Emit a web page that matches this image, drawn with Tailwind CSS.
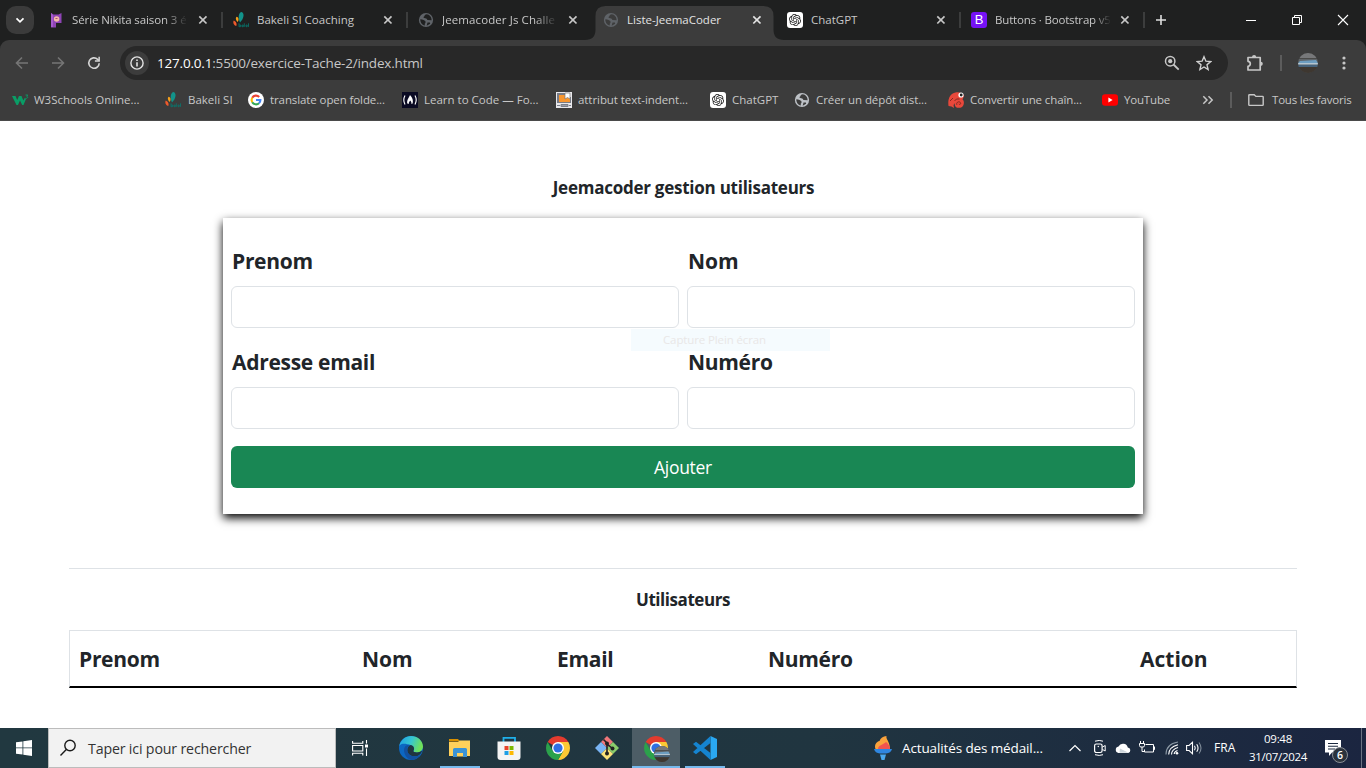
<!DOCTYPE html>
<html lang="fr">
<head>
<meta charset="utf-8">
<title>Liste-JeemaCoder</title>
<script src="https://cdn.jsdelivr.net/npm/@tailwindcss/browser@4"></script>
</head>
<body class="w-[1366px] h-[768px] overflow-hidden flex flex-col bg-white text-[#212529] font-['Open_Sans','Noto_Sans',sans-serif]">

<!-- shared symbols -->
<svg class="absolute w-0 h-0">
  <symbol id="x" viewBox="0 0 16 16"><path d="M4.3 4.3l7.2 7.2M11.500 4.300l-7.200 7.200" stroke="currentColor" stroke-width="1.7" fill="none"/></symbol>
  <symbol id="globe" viewBox="0 0 16 16"><circle cx="8" cy="8" r="7.100" fill="currentColor"/><path d="M8.800 2.300c-1.800.2-2.200 1.200-2.600 2.100-.9.300-.9 1.300.1 1.700l1.900.300c1.400.4.6 1.500 1.700 1.700l3.700.1c.1-3.100-2-5.600-4.800-5.900z" fill="var(--hole)"/><path d="M2.300 7.300c1.200 0 2.300.2 3.300.8 1.100.7 1.900.6 1.900 1.800 0 .9 0 1.300-.7 1.500v2.200c-2.600-.5-4.600-3-4.500-6.300z" fill="var(--hole)"/><path d="M9.500 10.400h2.400c.4 1 .3 1.500-.6 1.900l-2.600 1.400z" fill="var(--hole)"/></symbol>
  <symbol id="bakeli" viewBox="0 0 16 16"><path d="M7 10.500C4.500 5 6 .6 8.500.1c3 .8 2.800 6.500-1.500 10.400z" fill="#12938a"/><path d="M4.800 10C2.300 8 2.500 5.400 3.800 4.800c2 .8 2.300 2.900 1 5.200z" fill="#f5a01c"/><path d="M.8 8.600c2.300.9 3.400 3.400 2.400 5.400C.7 13.300-.4 10.300.8 8.600z" fill="#ef5a2b"/><path d="M6 11.200v3.700M6 13h1.700v1.700H6M9 13.100h1.300v1.600H9zM11.300 11.300v3.600M13 13h1.200v1.700H13zM15.500 11.300v3.600" stroke="#08776f" fill="none" stroke-width=".8"/></symbol>
  <symbol id="gpt" viewBox="0 0 16 16"><rect width="16" height="16" rx="3" fill="#fff"/><path transform="translate(2 2) scale(.5)" fill="#1c1c1c" d="M22.2819 9.8211a5.9847 5.9847 0 0 0-.5157-4.9108 6.0462 6.0462 0 0 0-6.5098-2.9A6.0651 6.0651 0 0 0 4.9807 4.1818a5.9847 5.9847 0 0 0-3.9977 2.9 6.0462 6.0462 0 0 0 .7427 7.0966 5.98 5.98 0 0 0 .511 4.9107 6.051 6.051 0 0 0 6.5146 2.9001A5.9847 5.9847 0 0 0 13.2599 24a6.0557 6.0557 0 0 0 5.7718-4.2058 5.9894 5.9894 0 0 0 3.9977-2.9001 6.0557 6.0557 0 0 0-.7475-7.0729zm-9.022 12.6081a4.4755 4.4755 0 0 1-2.8764-1.0408l.1419-.0804 4.7783-2.7582a.7948.7948 0 0 0 .3927-.6813v-6.7369l2.02 1.1686a.071.071 0 0 1 .038.052v5.5826a4.504 4.504 0 0 1-4.4945 4.4944zm-9.6607-4.1254a4.4708 4.4708 0 0 1-.5346-3.0137l.142.0852 4.783 2.7582a.7712.7712 0 0 0 .7806 0l5.8428-3.3685v2.3324a.0804.0804 0 0 1-.0332.0615L9.74 19.9502a4.4992 4.4992 0 0 1-6.1408-1.6464zM2.3408 7.8956a4.485 4.485 0 0 1 2.3655-1.9728V11.6a.7664.7664 0 0 0 .3879.6765l5.8144 3.3543-2.0201 1.1685a.0757.0757 0 0 1-.071 0l-4.8303-2.7865A4.504 4.504 0 0 1 2.3408 7.872zm16.5963 3.8558L13.1038 8.364 15.1192 7.2a.0757.0757 0 0 1 .071 0l4.8303 2.7913a4.4944 4.4944 0 0 1-.6765 8.1042v-5.6772a.79.79 0 0 0-.407-.667zm2.0107-3.0231l-.142-.0852-4.7735-2.7818a.7759.7759 0 0 0-.7854 0L9.409 9.2297V6.8974a.0662.0662 0 0 1 .0284-.0615l4.8303-2.7866a4.4992 4.4992 0 0 1 6.6802 4.66zM8.3065 12.863l-2.02-1.1638a.0804.0804 0 0 1-.038-.0567V6.0742a4.4992 4.4992 0 0 1 7.3757-3.4537l-.142.0805L8.704 5.459a.7948.7948 0 0 0-.3927.6813zm1.0976-2.3654l2.602-1.4998 2.6069 1.4998v2.9994l-2.5974 1.4997-2.6067-1.4997Z"/></symbol>
  <symbol id="chrome" viewBox="0 0 24 24"><path d="M12 12L1.610 6A12 12 0 0 1 22.390 6z" fill="#e33b2e"/><path d="M12 6H22.390A12 12 0 0 1 12 24l5.200-9z" fill="#fcc934"/><path d="M1.610 6L6.800 15l5.200 3 5.200-3L12 24A12 12 0 0 1 1.610 6z" fill="#2ba14b"/><circle cx="12" cy="12" r="6" fill="#fff"/><circle cx="12" cy="12" r="4.600" fill="#2f6fe4"/></symbol>
  <clipPath id="avc"><circle cx="10" cy="10" r="10"/></clipPath>
  <symbol id="avatar" viewBox="0 0 20 20"><g clip-path="url(#avc)"><rect width="20" height="20" fill="#4a4a48"/><rect width="20" height="5" fill="#77787a"/><path d="M0 6h20v3H0z" fill="#5f6468"/><path d="M2 8l16-1 2 3H0z" fill="#6d9dc0"/><path d="M0 10h20v1.700H0z" fill="#b4c5d0"/><path d="M0 11.700h20V14H0z" fill="#46637c"/><path d="M0 14h20v6H0z" fill="#3e3730"/></g></symbol>
</svg>

<!-- tab strip -->
<header class="h-10 shrink-0 bg-[#1f2020] flex items-center text-[11.5px] leading-4 text-[#c7c7c7]">
  <div class="w-7 h-7 ml-1.5 mr-1 rounded-[10px] bg-[#3b3b3b] flex items-center justify-center shrink-0">
    <svg class="w-3 h-3 text-white" viewBox="0 0 12 12"><path d="M2.500 4.300L6 7.800l3.500-3.500" fill="none" stroke="currentColor" stroke-width="1.700"/></svg>
  </div>

  <div class="w-[185px] h-full flex items-center pl-2.5 shrink-0">
    <svg class="w-4 h-4 mr-2 shrink-0" viewBox="0 0 16 16"><path d="M3 1l2.500 1.500h5L13.500 1v10H8v4.500H3z" fill="#8e44b5"/><path d="M3 1l2 2v12H3z" fill="#a65bcd"/><circle cx="8.600" cy="7" r="2.800" fill="#f3b9a9"/><path d="M7.500 6h2v1h-2z" fill="#a9526f"/></svg>
    <span class="w-[116px] whitespace-nowrap tracking-[-0.11px] mask-r-from-80%">Série Nikita saison 3 é</span>
    <svg class="w-4 h-4 ml-[7px]"><use href="#x"/></svg>
    <i class="w-0.5 h-4 bg-[#3c3d3d] ml-2.5"></i>
  </div>
  <div class="w-[185px] h-full flex items-center pl-2.5 shrink-0">
    <svg class="w-4 h-4 mr-2 shrink-0"><use href="#bakeli"/></svg>
    <span class="w-[116px] whitespace-nowrap">Bakeli SI Coaching</span>
    <svg class="w-4 h-4 ml-[7px]"><use href="#x"/></svg>
    <i class="w-0.5 h-4 bg-[#3c3d3d] ml-2.5"></i>
  </div>
  <div class="w-[185px] h-full flex items-center pl-2.5 shrink-0">
    <svg class="w-4 h-4 mr-2 shrink-0 text-[#5f6368] [--hole:#1f2020]"><use href="#globe"/></svg>
    <span class="w-[116px] whitespace-nowrap tracking-[0.1px] mask-r-from-80%">Jeemacoder Js Challe</span>
    <svg class="w-4 h-4 ml-[7px]"><use href="#x"/></svg>
  </div>
  <div class="w-[184px] h-full flex items-center pl-2.5 shrink-0 relative text-[#e3e3e3]">
    <svg class="absolute -left-[8.500px] top-1.5 w-[199px] h-[34px]" viewBox="0 0 199 34"><path d="M0 34Q10.500 34 10.500 23.500V10Q10.500 0 20.500 0H178.500Q188.500 0 188.500 10V23.500Q188.500 34 199 34z" fill="#3c3c3c"/></svg>
    <svg class="w-4 h-4 mr-2 shrink-0 relative text-[#5f6368] [--hole:#3c3c3c]"><use href="#globe"/></svg>
    <span class="w-[116px] whitespace-nowrap relative">Liste-JeemaCoder</span>
    <svg class="w-4 h-4 ml-1.5 relative"><use href="#x"/></svg>
  </div>
  <div class="w-[184px] h-full flex items-center pl-2.5 shrink-0">
    <svg class="w-4 h-4 mr-2 shrink-0"><use href="#gpt"/></svg>
    <span class="w-[116px] whitespace-nowrap">ChatGPT</span>
    <svg class="w-4 h-4 ml-1.5"><use href="#x"/></svg>
    <i class="w-0.5 h-4 bg-[#3c3d3d] ml-2.5"></i>
  </div>
  <div class="w-[184px] h-full flex items-center pl-2.5 shrink-0">
    <span class="w-4 h-4 mr-2 shrink-0 rounded-[3px] bg-[#7612f5] text-white text-[13px] leading-4 font-medium text-center font-['Liberation_Sans',sans-serif]">B</span>
    <span class="w-[116px] whitespace-nowrap tracking-[-0.17px] mask-r-from-85%">Buttons · Bootstrap v5</span>
    <svg class="w-4 h-4 ml-1.5"><use href="#x"/></svg>
    <i class="w-0.5 h-4 bg-[#3c3d3d] ml-2.5"></i>
  </div>
  <svg class="w-3 h-3 ml-2.5 text-[#dedede] shrink-0" viewBox="0 0 12 12"><path d="M6 1v10M1 6h10" stroke="currentColor" stroke-width="1.600"/></svg>
  <div class="ml-auto flex text-white">
    <span class="w-[46px] flex justify-center"><svg class="w-3 h-3" viewBox="0 0 12 12"><path d="M1 6.500h10" stroke="currentColor"/></svg></span>
    <span class="w-[46px] flex justify-center"><svg class="w-3 h-3" viewBox="0 0 12 12"><path d="M1.500 3.500h7v7h-7zM3.500 3.500v-2h7v7h-2" fill="none" stroke="currentColor"/></svg></span>
    <span class="w-[46px] flex justify-center"><svg class="w-3 h-3" viewBox="0 0 12 12"><path d="M1 1l10 10M11 1L1 11" stroke="currentColor" stroke-width="1.100"/></svg></span>
  </div>
</header>

<!-- toolbar -->
<div class="bg-[#1f2020] shrink-0">
<div class="h-[46px] bg-[#3c3c3c] rounded-t-[9px] flex items-center">
  <svg class="w-4 h-4 ml-3.5 text-[#757575]" viewBox="0 0 16 16"><path d="M14 8H3M8 2.500L2.500 8 8 13.500" fill="none" stroke="currentColor" stroke-width="1.600"/></svg>
  <svg class="w-4 h-4 ml-5 text-[#757575]" viewBox="0 0 16 16"><path d="M2 8h11M8 2.500L13.500 8 8 13.500" fill="none" stroke="currentColor" stroke-width="1.600"/></svg>
  <svg class="w-4 h-4 ml-5 text-[#d5d5d5]" viewBox="0 0 16 16"><path d="M13.200 8.200A5.200 5.200 0 1 1 11.600 4.300l1.200 1.200" fill="none" stroke="currentColor" stroke-width="1.600"/><path d="M13.900 1.800v5H8.900V5.300h3.500V1.800z" fill="currentColor"/></svg>
  <div class="ml-[18px] w-[1108px] h-[34px] rounded-full bg-[#282828] flex items-center pl-[5px]">
    <span class="w-6 h-6 rounded-full bg-[#3c3c3c] flex items-center justify-center"><svg class="w-3.5 h-3.5 text-[#e3e3e3]" viewBox="0 0 14 14"><circle cx="7" cy="7" r="6.100" fill="none" stroke="currentColor" stroke-width="1.400"/><path d="M6.200 6.200h1.600v4.200H6.200zM6.200 3.500h1.600v1.600H6.200z" fill="currentColor"/></svg></span>
    <span class="ml-2 text-[13.500px] leading-5 tracking-[-0.190px] text-[#c7c7c7]"><span class="text-white">127.0.0.1</span>:5500/exercice-Tache-2/index.html</span>
    <svg class="w-4 h-4 ml-auto text-[#c7c7c7]" viewBox="0 0 16 16"><circle cx="6.200" cy="6.200" r="4.700" fill="none" stroke="currentColor" stroke-width="1.500"/><path d="M9.500 9.500l5.200 5.200" stroke="currentColor" stroke-width="1.800"/><circle cx="6.200" cy="6.200" r="2.100" fill="currentColor"/></svg>
    <svg class="w-4 h-4 ml-4 mr-4 text-[#d0d0d0]" viewBox="0 0 16 16"><path d="M8 1.700l1.900 4.500 4.800.4-3.700 3.200 1.100 4.700L8 12l-4.100 2.500L5 9.800 1.300 6.600l4.800-.4z" fill="none" stroke="currentColor" stroke-width="1.400"/></svg>
  </div>
  <svg class="w-[18px] h-[18px] ml-[18px] text-[#c7c7c7]" viewBox="0 0 18 18"><path d="M2 3.500h12.200V16H2v-3.700q2.300-.3 2.300-2.500T2 7.300z" fill="none" stroke="currentColor" stroke-width="1.700" stroke-linejoin="round"/><path d="M6 3a2.100 2 0 0 1 4.200 0zM14.800 7.700a2 2.100 0 0 1 0 4.200z" fill="currentColor"/></svg>
  <i class="w-0.5 h-4 ml-4 bg-[#5c5c5c]"></i>
  <svg class="w-5 h-5 ml-4"><use href="#avatar"/></svg>
  <svg class="w-4 h-4 ml-[18px] text-[#c7c7c7]" viewBox="0 0 16 16"><circle cx="8" cy="3" r="1.600" fill="currentColor"/><circle cx="8" cy="8" r="1.600" fill="currentColor"/><circle cx="8" cy="13" r="1.600" fill="currentColor"/></svg>
</div>
</div>

<!-- bookmarks -->
<nav class="h-[35px] shrink-0 bg-[#3c3c3c] border-b border-[#4a4a4a] flex items-center pl-3 pb-1.5 text-[11.500px] leading-4 text-[#c7c7c7] whitespace-nowrap">
  <div class="w-[153px] flex items-center"><svg class="w-[18px] h-4 mr-1" viewBox="0 0 18 16"><path d="M0 4h3.500l1.700 4L7 4h2.500l1.800 4.500L13 5.500l1 1.500-2.500 6h-1.300L8 8.500 6 13H4.500z" fill="#0a9d66"/><path d="M13.500 3h2.300l-1.100 1.300c1.600.4 1.100 2.200-.6 2" fill="none" stroke="#0a9d66" stroke-width=".9"/></svg>W3Schools Online...</div>
  <div class="w-[83px] flex items-center"><svg class="w-4 h-4 mr-[7px]"><use href="#bakeli"/></svg>Bakeli SI</div>
  <div class="w-[154px] flex items-center"><svg class="w-4 h-4 mr-1.5" viewBox="0 0 16 16"><circle cx="8" cy="8" r="8" fill="#fff"/><g fill="none" stroke-width="2.100"><path d="M4.200 5.800A4.400 4.400 0 0 1 11.200 5" stroke="#ea4335"/><path d="M4.200 10.200a4.400 4.400 0 0 1 0-4.400" stroke="#fbbc05"/><path d="M11 11.200a4.400 4.400 0 0 1-6.800-1" stroke="#34a853"/><path d="M8 8h4.400a4.400 4.400 0 0 1-1.400 3.200" stroke="#4285f4"/></g></svg><span class="tracking-[-0.100px]">translate open folde...</span></div>
  <div class="w-[154px] flex items-center"><svg class="w-4 h-4 mr-1.5" viewBox="0 0 16 16"><rect width="16" height="16" fill="#0a0a23"/><path d="M3 3.500Q.6 8 3 12.500M13 3.500q2.400 4.500 0 9" fill="none" stroke="#fff" stroke-width="1.100"/><path d="M8 3c2 2.500 3.600 4.800 2.600 8.500L9.400 12c.3-1.500-.3-2.500-1.200-3.500-.6 1-1.700 2-1.400 3.500l-1.500-.5C4.500 8.300 7 5.500 8 3z" fill="#fff"/></svg>Learn to Code — Fo...</div>
  <div class="w-[154px] flex items-center"><svg class="w-4 h-4 mr-1.5" viewBox="0 0 16 16"><rect width="16" height="16" fill="#e8e8ec"/><path d="M1 1h9v4h5v6H1z" fill="#777b86"/><path d="M3 3h11v7H3z" fill="#f7962f"/><path d="M9 1h5v6l-2.500-1.500L9 7z" fill="#fff" stroke="#777" stroke-width=".7"/><path d="M1 13.500h3M5 12.500h7v2H5zM13 13.500h2" fill="#9a9da6" stroke="#7b7f8a" stroke-width="1"/></svg><span class="tracking-[-0.060px]">attribut text-indent...</span></div>
  <div class="w-[84px] flex items-center"><svg class="w-4 h-4 mr-1.5"><use href="#gpt"/></svg>ChatGPT</div>
  <div class="w-[154px] flex items-center"><svg class="w-4 h-4 mr-1.5 text-[#bdc1c6] [--hole:#3c3c3c]"><use href="#globe"/></svg><span class="tracking-[-0.080px]">Créer un dépôt dist...</span></div>
  <div class="w-[154px] flex items-center"><svg class="w-4 h-4 mr-1.5" viewBox="0 0 16 16"><path d="M.5 14C-.5 7 2 1.500 7.500.5c4-.7 7.500.5 8.500 3.500l-1.500 3.500c2.200 1.500 2 7-2 8.200-4.500.8-6.500-1.700-5.500-4.700L5.500 13l.5 3-2.500-1.500z" fill="#e8483b"/><path d="M8.800 12.800c-1-3 3-4 3.800-1.800.4 1.400-1.400 2-1.700.8M2 9l3-3M6.500 9l2-2h3" fill="none" stroke="#7a241d" stroke-width=".9"/><circle cx="13" cy="3" r="2.600" fill="#fff"/><circle cx="13.200" cy="3" r="1.400" fill="#222"/></svg><span class="tracking-[-0.110px]">Convertir une chaîn...</span></div>
  <div class="w-[98px] flex items-center"><svg class="w-4 h-4 mr-1.5" viewBox="0 0 16 16"><rect y="2.300" width="16" height="11.400" rx="3" fill="#f00"/><path d="M6.400 5.500l4.200 2.500-4.200 2.500z" fill="#fff"/></svg><span class="tracking-[-0.180px]">YouTube</span></div>
  <svg class="w-4 h-4 text-[#c7c7c7]" viewBox="0 0 16 16"><path d="M3.300 4.300L7 8l-3.700 3.700M8.500 4.300L12.200 8l-3.700 3.700" fill="none" stroke="currentColor" stroke-width="1.500"/></svg>
  <i class="w-0.5 h-4 ml-3.5 bg-[#5c5c5c]"></i>
  <svg class="w-4 h-4 ml-4 mr-2" viewBox="0 0 16 16"><path d="M.8 3.300Q.8 2.700 1.500 2.700h4.700l1.700 1.700h6.600q.7 0 .7.700v7.600q0 .7-.7.700h-13q-.7 0-.7-.7z" fill="none" stroke="currentColor" stroke-width="1.400"/></svg>
  <span class="tracking-[-0.200px]">Tous les favoris</span>
</nav>

<!-- page -->
<main class="h-[607px] shrink-0 px-[69px] pt-[53px] flex flex-col font-bold relative">
  <h1 class="text-center text-[17px] leading-7 tracking-[-0.250px] h-11 pl-px">Jeemacoder gestion utilisateurs</h1>
  <form class="w-[920px] h-[296px] mx-auto px-2 pt-[26px] shadow-[0_4px_9px_#000] bg-white">
    <div class="grid grid-cols-2 gap-x-2 text-[21px] leading-[35px] tracking-[-0.300px]">
      <label class="h-[101px] block"><span class="block h-[42px] pl-px">Prenom</span><input class="block w-full h-[42px] border border-[#dee2e6] rounded-md"></label>
      <label class="h-[101px] block"><span class="block h-[42px] pl-px tracking-[0px]">Nom</span><input class="block w-full h-[42px] border border-[#dee2e6] rounded-md"></label>
      <label class="h-[101px] block"><span class="block h-[42px] pl-px">Adresse email</span><input class="block w-full h-[42px] border border-[#dee2e6] rounded-md"></label>
      <label class="h-[101px] block"><span class="block h-[42px] pl-px">Numéro</span><input class="block w-full h-[42px] border border-[#dee2e6] rounded-md"></label>
    </div>
    <button type="button" class="w-full h-[42px] rounded-md bg-[#198754] text-white font-normal text-[17.500px] leading-6 tracking-[-0.300px] block">Ajouter</button>
  </form>
  <div class="absolute left-[631px] top-[208px] w-[199px] h-[22px] bg-[#f5fbfe] pl-8 text-[11.500px] leading-[22px] font-normal tracking-[-0.120px] text-[#e9e7e7]">Capture Plein écran</div>
  <hr class="mt-[54px] border-[#dee2e6]">
  <h2 class="text-center text-[17px] leading-7 tracking-[-0.440px] mt-[17px]">Utilisateurs</h2>
  <div class="mt-4 h-[58px] border border-b-2 border-[#dee2e6] border-b-black grid grid-cols-[283px_195px_211px_372px_1fr] pl-[9px] items-center text-[21px] leading-8 tracking-[-0.300px]">
    <span>Prenom</span><span class="tracking-[0px]">Nom</span><span>Email</span><span>Numéro</span><span class="tracking-[0px]">Action</span>
  </div>
</main>

<!-- taskbar -->
<footer class="h-10 shrink-0 bg-linear-to-r from-[#213840] via-[#203540] via-60% to-[#1b2540] flex items-center text-white whitespace-nowrap">
  <div class="w-12 flex justify-center"><svg class="w-4 h-4" viewBox="0 0 16 16"><path d="M0 2.300l6.500-.9v6.100H0zM7.300 1.300L16 0v7.500H7.300zM0 8.300h6.500v6.200L0 13.700zM7.300 8.300H16V16l-8.700-1.300z" fill="#fff"/></svg></div>
  <div class="w-72 h-10 bg-[#f2f2f2] border border-[#bcbcbc] flex items-center text-[#333]">
    <svg class="w-[18px] h-[18px] ml-2.5" viewBox="0 0 18 18"><circle cx="11" cy="6.500" r="5.200" fill="none" stroke="#1a1a1a" stroke-width="1.400"/><path d="M7.300 10.400L1.500 16.500" stroke="#1a1a1a" stroke-width="1.400"/></svg>
    <span class="ml-[11px] text-[14.200px] tracking-[-0.160px] pt-0.5">Taper ici pour rechercher</span>
  </div>
  <div class="w-12 flex justify-center"><svg class="w-4 h-4" viewBox="0 0 16 16"><g fill="none" stroke="#fff" stroke-width="1.100"><path d="M.6 1v2.200h10.200V1M.6 15.500v-2.200h10.200v2.200M.6 5.500h10.200v5.500H.6zM14.500 0v3.500M14.500 8.500V16"/></g><path d="M13 4.500h3v3h-3z" fill="#fff"/></svg></div>

  <div class="w-[54px] flex justify-center"><svg class="w-6 h-6" viewBox="0 0 24 24"><defs><linearGradient id="ea" x1="0" x2="1" y1="0" y2=".3"><stop offset="0" stop-color="#1c9ee8"/><stop offset=".55" stop-color="#37c6d0"/><stop offset="1" stop-color="#6fe05a"/></linearGradient></defs><circle cx="12" cy="12" r="12" fill="#0c67c2"/><path d="M.2 10C1.500 4 6.300 0 12 0c6.600 0 12 4.700 12 10.500 0 3.600-2.800 6-6 6-2.400 0-4-.8-3.600-1.700 1.400-1.600 1-5.100-2.900-5.900C7.500 8 2.500 6.500.2 10z" fill="url(#ea)"/><path d="M8.300 14.500c0-2.800 1.300-4.900 3.500-5.500 3.300.7 3.900 4.100 2.600 5.800-.4.900 1.200 1.700 3.600 1.700 1.600 0 3-.4 4.200-1.400.5-.2.900.2.600.7-1.300 2.400-3.200 4-5.400 4.400-5 .8-9.100-2-9.100-5.700z" fill="#203540"/><path d="M5 14c0-3 1.900-5 5.300-5.200-1.600 1.400-2.200 3.300-2 5.700.4 3.900 4.500 6.300 9.100 5.700 1.700-.3 3-.9 4.200-2-1.300 3-5.400 5.700-9.400 5.700C7.500 22.800 5 18 5 14z" fill="#1250a0"/></svg></div>
  <div class="w-12 h-full flex flex-col items-center -ml-0.5 relative"><svg class="w-[22px] h-6 mt-2" viewBox="0 0 22 24"><path d="M0 3h9l2 2.500H0z" fill="#d99000"/><path d="M0 6h9l1.500-1.500H21V20H0z" fill="#ffd15b"/><path d="M4 13.500q0-1.500 1.500-1.500h11q1.500 0 1.500 1.500V21h-4v-4H8v4H4z" fill="#3a93d6"/><path d="M8 17h6v3.500H8z" fill="#ffd15b"/></svg><i class="absolute bottom-0 left-1 w-10 h-0.5 bg-[#76b9ed]"></i></div>
  <div class="w-[49px] flex justify-center"><svg class="w-6 h-6" viewBox="0 0 24 24"><path d="M6.500 6V1.800h11.500V6" fill="none" stroke="#1fb0ea" stroke-width="1.800"/><path d="M.5 5.500h23V21q0 3-3 3h-17q-3 0-3-3z" fill="#f4f4f4"/><path d="M7.500 10h4v4h-4z" fill="#e8442a"/><path d="M12.500 10h4v4h-4z" fill="#7cb900"/><path d="M7.500 15h4v4h-4z" fill="#1d9fe6"/><path d="M12.500 15h4v4h-4z" fill="#fdb900"/></svg></div>
  <div class="w-[49px] flex justify-center"><svg class="w-6 h-6"><use href="#chrome"/></svg></div>
  <div class="w-[49px] flex justify-center"><svg class="w-6 h-6" viewBox="0 0 24 24"><path d="M12 0l6 6-6 6-6-6z" fill="#f0767a"/><path d="M6 6l6 6-6 6-6-6z" fill="#79b4f4"/><path d="M18 6l6 6-6 6-6-6z" fill="#8acb6b"/><path d="M12 12l6 6-6 6-6-6z" fill="#fbe278"/><path d="M8.500 3.500L12 7v11M12 8l5.500 4.500" fill="none" stroke="#222" stroke-width="1.600"/><circle cx="12" cy="7.500" r="2" fill="#222"/><circle cx="12" cy="17.500" r="2" fill="#222"/><circle cx="17.500" cy="12.500" r="2" fill="#222"/></svg></div>
  <div class="w-12 h-full ml-px bg-[#4d5d66] border-b-2 border-[#76b9ed] flex justify-center pt-2 relative"><svg class="w-6 h-6"><use href="#chrome"/></svg><svg class="absolute left-[22px] top-[18px] w-4 h-4"><use href="#avatar"/></svg></div>
  <div class="w-[50px] h-full flex justify-center relative"><svg class="w-6 h-6 mt-2" viewBox="0 0 24 24"><path d="M17.500 0L24 3v18l-6.500 3z" fill="#2aa8f2"/><path d="M17.500 0v7L3 18.300 0 16zM0 8l3-2.300L17.500 17v7z" fill="#1584d0"/></svg><i class="absolute bottom-0 left-[5px] w-10 h-0.5 bg-[#76b9ed]"></i></div>

  <div class="ml-auto flex items-center h-full">
    <svg class="w-[18px] h-6" viewBox="0 0 18 24"><path d="M1.500 13C0 9 2.500 5.500 5.500 5 6.500 2 9 .5 12.500 0c-1 3 3.500 5.500 3.500 13z" fill="#f9a23c"/><path d="M4 13c0-4 5-4 8-7 2 1.500 4 4 4 7z" fill="#f0544f"/><path d="M0 13h18q-1 4-6 4.500H6Q1 17 0 13z" fill="#2f86e0"/><path d="M6 18.500h6L10.500 24h-3z" fill="#4aa9f0"/></svg>
    <span class="ml-2.5 text-[13.500px] tracking-[-0.120px] w-[142px]">Actualités des médail...</span>
    <svg class="w-3 h-3 ml-[25px]" viewBox="0 0 12 12"><path d="M.5 9L6 3.500 11.500 9" fill="none" stroke="#fff" stroke-width="1.200"/></svg>
    <svg class="w-3 h-4 ml-[13px]" viewBox="0 0 12 16"><rect x=".6" y="4" width="7.500" height="8.500" rx="1.700" fill="none" stroke="#fff" stroke-width="1.200"/><path d="M8.500 7l2.700-1.500v5.500L8.500 9.500M1 1.200Q5.500-.3 9 1.200M1 14.700q4.500 1.500 8 0" fill="none" stroke="#fff"/><circle cx="4.300" cy="6.500" r=".7" fill="#fff"/></svg>
    <svg class="w-4 h-4 ml-[9px]" viewBox="0 0 16 16"><path d="M3.500 13a3.300 3.300 0 0 1 0-6.500 5 5 0 0 1 9.300 1A2.800 2.800 0 0 1 13.200 13z" fill="#fff"/><path d="M5 8.500l8.500 4.300h-9z" fill="#ccd4da"/></svg>
    <svg class="w-4 h-4 ml-2" viewBox="0 0 16 16"><g fill="none" stroke="#fff"><path d="M6.500 4.500h8v7.500h-9V9.500M14.500 6.800h1v2.900h-1M1.500 1v2M4.500 1v2M.5 3.500h5v2q0 1.500-1.500 1.500H2Q.5 7 .5 5.500zM3 7v4.500h2.500"/></g></svg>
    <svg class="w-3.5 h-3.5 ml-2.5" viewBox="0 0 14 14"><g fill="none" stroke="#fff" stroke-width="1.100"><path d="M9.200 13q0-2.300 3.300-3.500M6.500 13.500q0-5 6.500-7M3.700 13.500Q3.700 6 13 3.700" /><path d="M1 13.500Q1 3 13 1" stroke="#8b99a5"/></g><circle cx="12" cy="12.300" r="1.300" fill="#fff"/></svg>
    <svg class="w-[17px] h-4 ml-[7px]" viewBox="0 0 17 16"><path d="M.6 5.500h2.500L6.500 2.200v11.600L3.100 10.500H.6zM8.500 5.800q1.500 2.200 0 4.400M10.700 4.200q2.700 3.800 0 7.600" fill="none" stroke="#fff" stroke-width="1.100"/><path d="M13 2.500q4 5.500 0 11" fill="none" stroke="#7e8b98" stroke-width="1.100"/></svg>
    <span class="ml-[11px] text-[12px] w-[22px] tracking-[0.100px]">FRA</span>
    <div class="ml-3 w-[60px] text-center text-[11.500px] leading-[18px] tracking-[-0.300px] -mt-px"><div>09:48</div><div>31/07/2024</div></div>
    <div class="relative w-[46px] h-full">
      <svg class="absolute left-[17px] top-3 w-4 h-4" viewBox="0 0 16 16"><path d="M0 0h16v12.500H7L4 16v-3.500H0z" fill="#fff"/><path d="M3 3.500h10M3 6.300h10M3 9h7" stroke="#1c2a40" stroke-width="1.100"/></svg>
      <span class="absolute left-[24px] top-[19px] w-4 h-4 rounded-full bg-[#2b333d] border border-[#8a8f96] text-[10.500px] leading-[14px] font-semibold text-center">6</span>
    </div>
    <i class="w-px h-full bg-[#6a7383] ml-[7px] mr-1"></i>
  </div>
</footer>
</body>
</html>
